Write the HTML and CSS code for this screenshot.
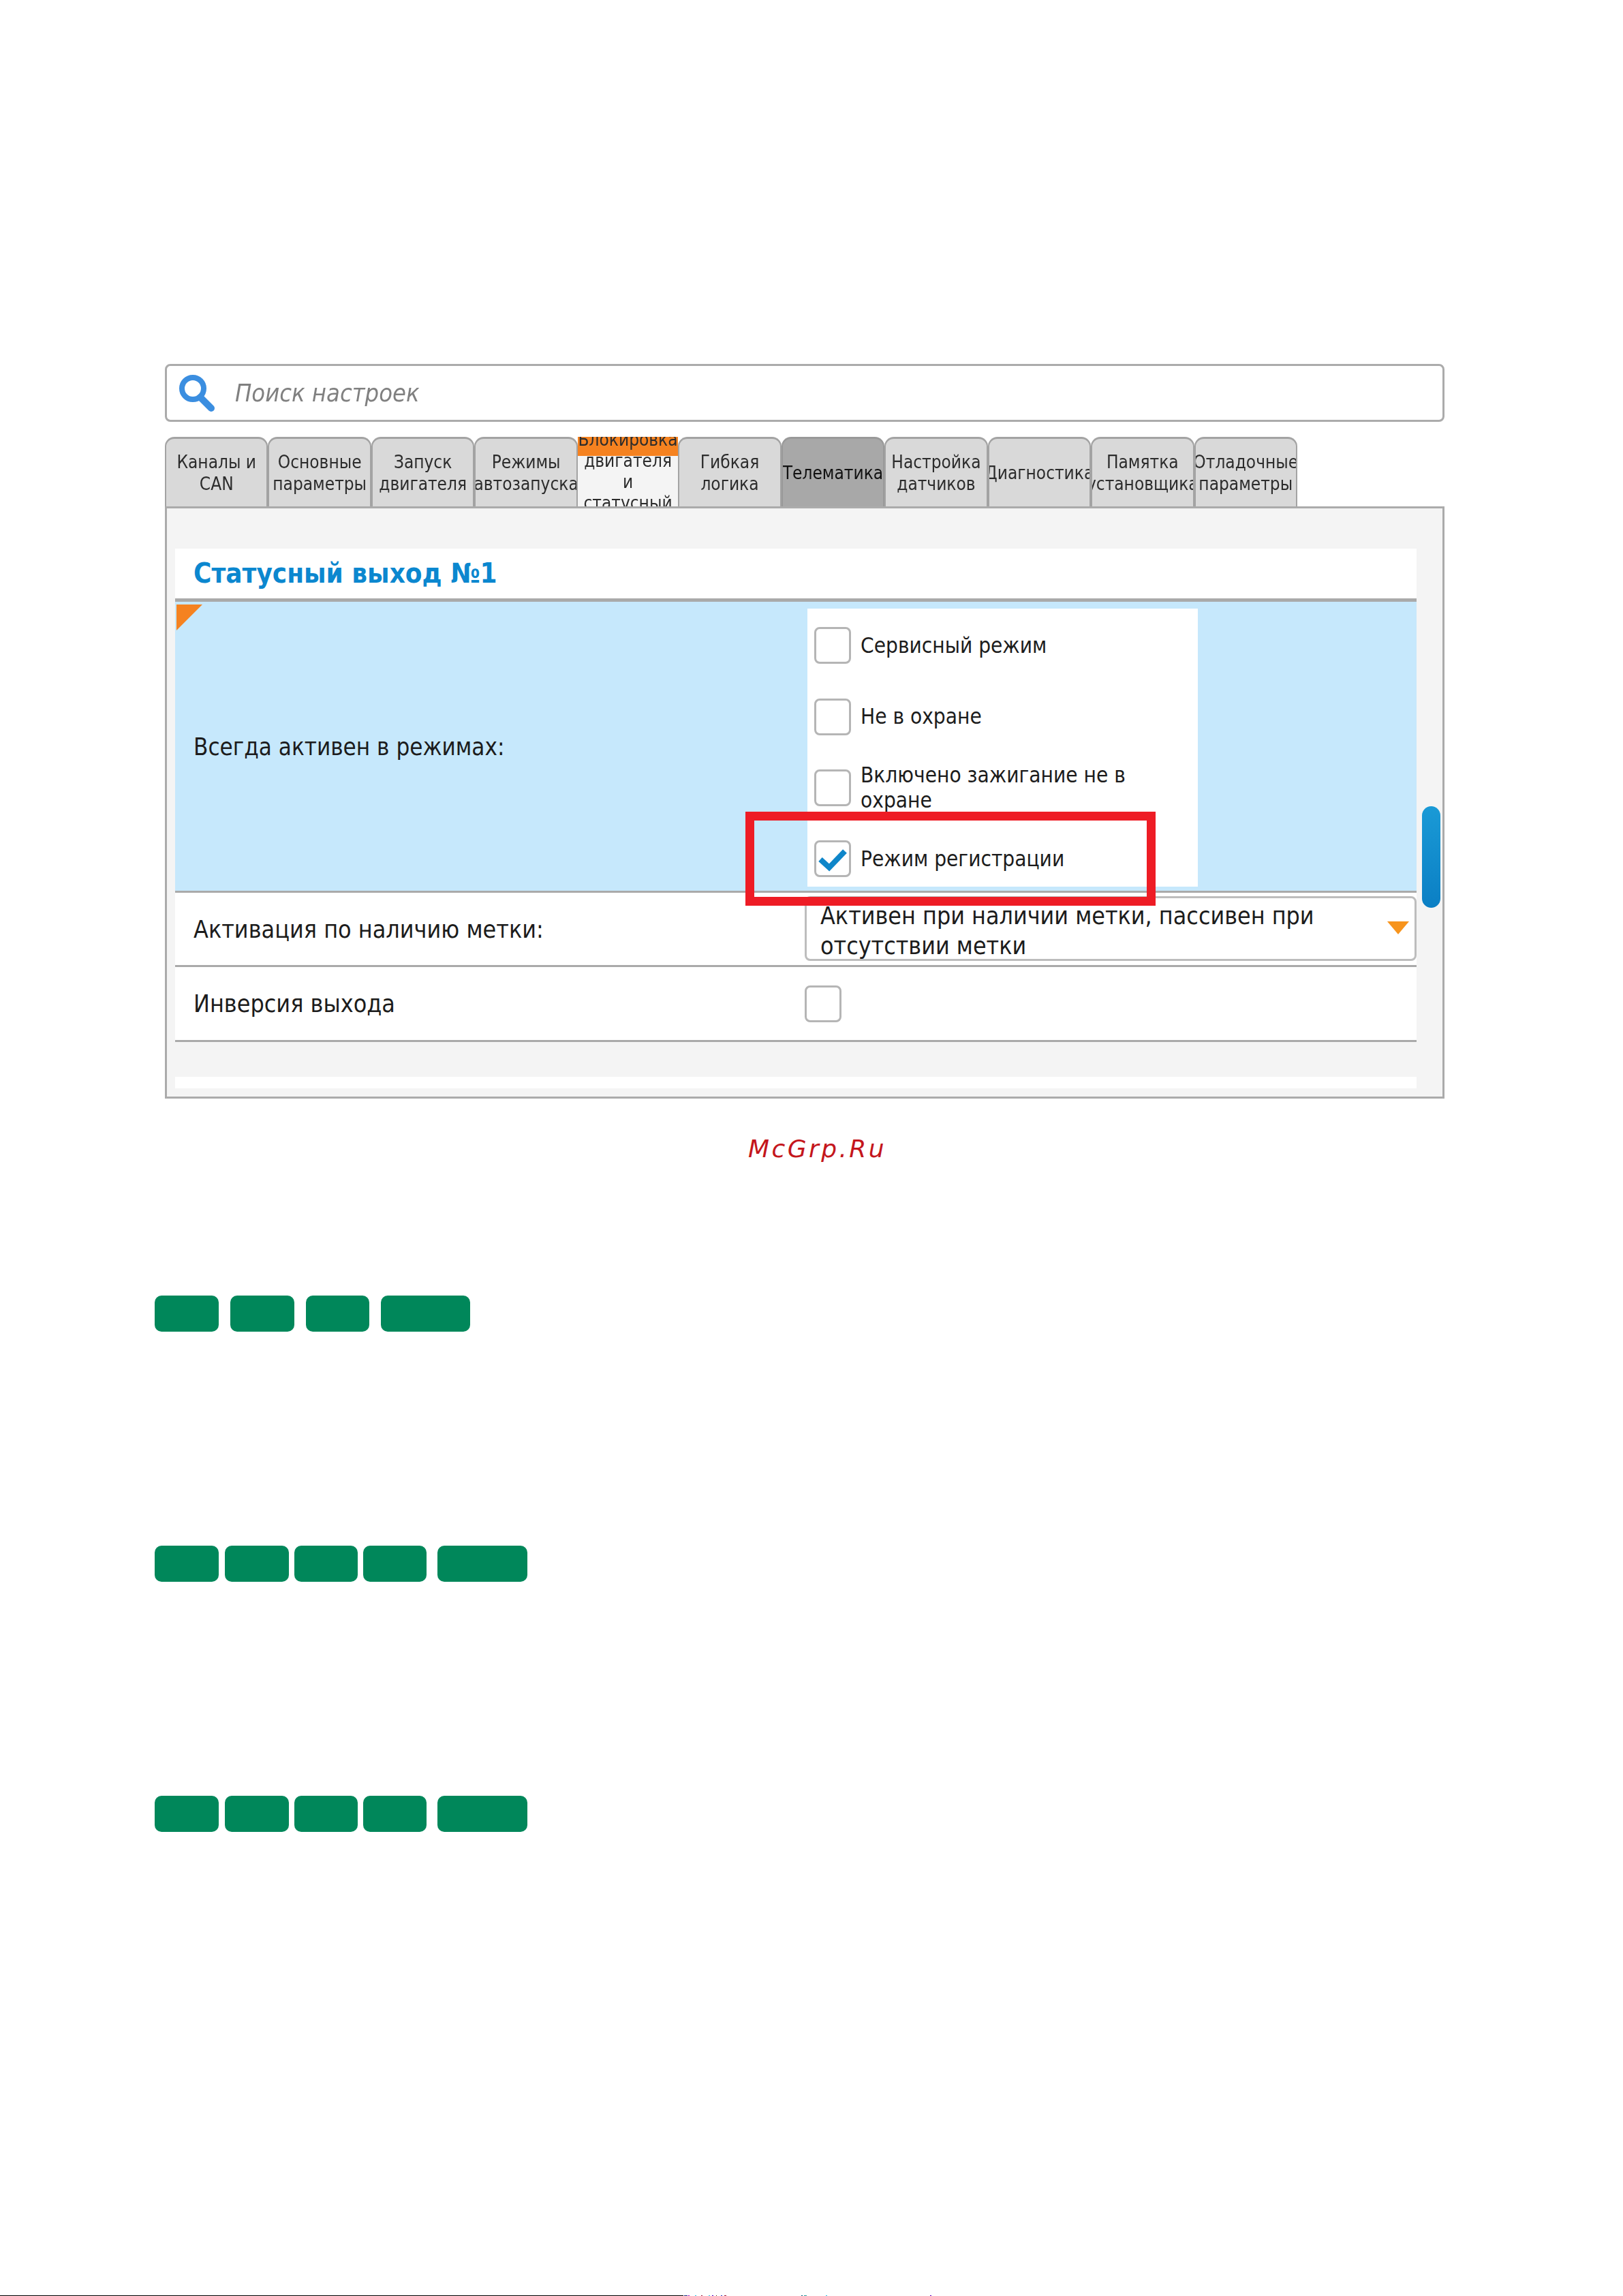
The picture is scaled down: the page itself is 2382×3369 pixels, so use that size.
FILE: index.html
```html
<!DOCTYPE html>
<html lang="ru">
<head>
<meta charset="utf-8">
<title>Статусный выход</title>
<link rel="stylesheet" href="styles.css">
</head>
<body>
<div class="page">
  <div class="settings">
    <div class="search">
      <svg class="search-icon" width="54" height="54" viewBox="0 0 54 54"><circle cx="21" cy="20" r="16" fill="none" stroke="#3b8ee0" stroke-width="8"/><path d="M32 33 L48 49" stroke="#3b8ee0" stroke-width="10" stroke-linecap="round"/></svg>
      <span class="placeholder">Поиск настроек</span>
    </div>
    <div class="tabs">
      <div class="tab"><span>Каналы и<br>CAN</span></div>
      <div class="tab"><span>Основные<br>параметры</span></div>
      <div class="tab"><span>Запуск<br>двигателя</span></div>
      <div class="tab"><span>Режимы<br>автозапуска</span></div>
      <div class="tab tab-alert"><span>Блокировка<br>двигателя<br>и<br>статусный</span></div>
      <div class="tab"><span>Гибкая<br>логика</span></div>
      <div class="tab tab-active"><span>Телематика</span></div>
      <div class="tab"><span>Настройка<br>датчиков</span></div>
      <div class="tab"><span>Диагностика</span></div>
      <div class="tab"><span>Памятка<br>установщика</span></div>
      <div class="tab"><span>Отладочные<br>параметры</span></div>
    </div>
    <div class="panel">
      <div class="section-title">Статусный выход №1</div>
      <div class="row row-modes">
        <div class="corner"></div>
        <div class="label">Всегда активен в режимах:</div>
        <div class="options">
          <div class="option"><span class="check"></span><span>Сервисный режим</span></div>
          <div class="option"><span class="check"></span><span>Не в охране</span></div>
          <div class="option"><span class="check"></span><span>Включено зажигание не в охране</span></div>
          <div class="option"><span class="check"><svg width="48" height="48" viewBox="0 0 48 48"><path d="M6 25 L19 37 L42 13" fill="none" stroke="#0f86c9" stroke-width="8"/></svg></span><span>Режим регистрации</span></div>
        </div>
      </div>
      <div class="row row-tag">
        <div class="label">Активация по наличию метки:</div>
        <div class="select"><span>Активен при наличии метки, пассивен при отсутствии метки</span><i class="arrow"></i></div>
      </div>
      <div class="row row-inv">
        <div class="label">Инверсия выхода</div>
        <span class="check"></span>
      </div>
      <div class="next-section"></div>
      <div class="scrollbar"></div>
    </div>
    <div class="highlight"></div>
  </div>
  <div class="watermark">McGrp.Ru</div>
  <div class="bars bars-first">
    <span class="bar b94"></span><span class="bar b94 gap-17"></span><span class="bar b93 gap-17"></span><span class="bar b131 gap-17"></span>
  </div>
  <div class="bars bars-next">
    <span class="bar b94"></span><span class="bar b94 gap-9"></span><span class="bar b93 gap-8"></span><span class="bar b93 gap-8"></span><span class="bar b132 gap-16"></span>
  </div>
  <div class="bars bars-next">
    <span class="bar b94"></span><span class="bar b94 gap-9"></span><span class="bar b93 gap-8"></span><span class="bar b93 gap-8"></span><span class="bar b132 gap-16"></span>
  </div>
  <svg class="scanline" width="2382" height="2" viewBox="0 0 2382 2"><rect width="1003" height="2" fill="#000"/><rect x="1004" width="5" height="2" fill="#203080"/><rect x="1010" width="2" height="2" fill="#a000c0"/><rect x="1020" width="2" height="2" fill="#30c0e0"/><rect x="1029" width="2" height="2" fill="#a02040"/><rect x="1040" width="2" height="2" fill="#30c0e0"/><rect x="1045" width="2" height="2" fill="#5000c0"/><rect x="1051" width="1" height="2" fill="#404000"/><rect x="1058" width="2" height="2" fill="#3040c0"/><rect x="1063" width="3" height="2" fill="#a02040"/><rect x="1176" width="2" height="2" fill="#006080"/><rect x="1180" width="4" height="2" fill="#30a0a0"/><rect x="1212" width="2" height="2" fill="#30c0e0"/><rect x="1365" width="2" height="2" fill="#6000c0"/></svg>
</div>
</body>
</html>
```

FILE: styles.css
```css
* { box-sizing: border-box; }
html, body { margin: 0; padding: 0; background: #fff; }
.page {
  width: 2382px;
  height: 3369px;
  overflow: hidden;
  display: flex;
  flex-direction: column;
  font-family: "DejaVu Sans", sans-serif;
  font-stretch: condensed;
  color: #1c1c1c;
}
.settings {
  position: relative;
  width: 1878px;
  margin: 534px 0 0 242px;
  flex: none;
  filter: blur(0.6px);
}
.search {
  height: 85px;
  border: 3px solid #ababab;
  border-radius: 8px;
  background: #fff;
  display: flex;
  align-items: center;
  padding-left: 17px;
}
.search-icon { flex: none; }
.placeholder {
  margin-left: 29px;
  font-size: 36px;
  font-style: italic;
  color: #808080;
}
.tabs {
  display: flex;
  height: 102px;
  margin-top: 22px;
  width: 1662px;
}
.tab {
  flex: 1 1 0;
  min-width: 0;
  background: #d9d9d9;
  border: 3px solid #a3a3a3;
  border-bottom: 0;
  border-left-width: 2px;
  border-right-width: 2px;
  border-radius: 14px 14px 0 0;
  overflow: hidden;
  display: flex;
  align-items: center;
  justify-content: center;
  text-align: center;
  font-size: 26px;
  line-height: 32px;
  color: #2c2c2c;
}
.tab span { white-space: nowrap; }
.tab-active { background: #a8a8a8; border-color: #999; color: #111; }
.tab-alert {
  border: 0;
  border-radius: 0;
  background: linear-gradient(#f58220 0 28px, #f4f4f4 28px);
  align-items: flex-start;
}
.tab-alert span { display: block; margin-top: -11px; line-height: 31px; }
.panel {
  position: relative;
  height: 869px;
  border: 3px solid #ababab;
  background: #f4f4f4;
  padding: 59px 38px 0 12px;
  overflow: hidden;
}
.section-title {
  height: 78px;
  padding: 0 27px;
  background: #fff;
  border-bottom: 5px solid #aaa;
  font-size: 40px;
  font-weight: 700;
  line-height: 72px;
  color: #0b87cf;
}
.row {
  display: grid;
  grid-template-columns: 924px 1fr;
  align-items: center;
  position: relative;
}
.label { padding-left: 27px; font-size: 35.6px; color: #1c1c1c; }
.row-modes {
  height: 427px;
  background: #c6e8fc;
  border-bottom: 3px solid #aaa;
}
.row-modes .label { font-size: 34.7px; padding-top: 2px; }
.corner {
  position: absolute;
  left: 2px;
  top: 4px;
  width: 0;
  height: 0;
  border-top: 38px solid #f58220;
  border-right: 38px solid transparent;
}
.options {
  align-self: start;
  margin: 10px 0 0 4px;
  width: 573px;
  height: 408px;
  background: #fff;
  padding-top: 2px;
}
.option {
  height: 104.4px;
  display: flex;
  align-items: center;
  padding-left: 10px;
  gap: 14px;
  font-size: 31.3px;
  line-height: 37px;
}
.option span:last-child { width: 480px; }
.check {
  flex: none;
  display: block;
  width: 54px;
  height: 54px;
  background: #fff;
  border: 3px solid #b5b5b5;
  border-radius: 8px;
}
.check svg { display: block; margin: 0; }
.row-tag {
  height: 109px;
  background: #fff;
  border-bottom: 3px solid #aaa;
}
.select {
  position: relative;
  height: 95px;
  margin-top: -2px;
  border: 3px solid #bdbdbd;
  border-radius: 8px;
  background: #fff;
  padding: 4px 60px 0 20px;
  font-size: 35.5px;
  line-height: 44px;
  overflow: hidden;
}
.arrow {
  position: absolute;
  right: 8px;
  top: 34px;
  width: 0;
  height: 0;
  border-left: 16px solid transparent;
  border-right: 16px solid transparent;
  border-top: 19px solid #f7941d;
}
.row-inv {
  height: 110px;
  background: #fff;
  border-bottom: 3px solid #aaa;
}
.next-section { height: 17px; margin-top: 51px; background: #fff; }
.scrollbar {
  position: absolute;
  left: 1842px;
  top: 437px;
  width: 27px;
  height: 149px;
  border-radius: 14px;
  background: linear-gradient(#1a9ad6, #0b7fc4);
}
.highlight {
  position: absolute;
  left: 852px;
  top: 657px;
  width: 602px;
  height: 138px;
  border: 13px solid #ee1c25;
}
.watermark {
  margin: 52px 0 0 1098px;
  height: 44px;
  font-size: 36px;
  line-height: 44px;
  font-style: italic;
  font-stretch: normal;
  letter-spacing: 3.4px;
  color: #c4161c;
}
.bars { display: flex; height: 53px; margin-left: 227px; flex: none; }
.bars-first { margin-top: 193px; }
.bars-next { margin-top: 314px; }
.bar { display: block; height: 53px; background: #00875a; border-radius: 10px; }
.b93 { width: 93px; }
.b94 { width: 94px; }
.b131 { width: 131px; }
.b132 { width: 132px; }
.gap-8 { margin-left: 8px; }
.gap-9 { margin-left: 9px; }
.gap-16 { margin-left: 16px; }
.gap-17 { margin-left: 17px; }
.scanline { display: block; margin-top: auto; flex: none; transform: translateY(1px); }
```
